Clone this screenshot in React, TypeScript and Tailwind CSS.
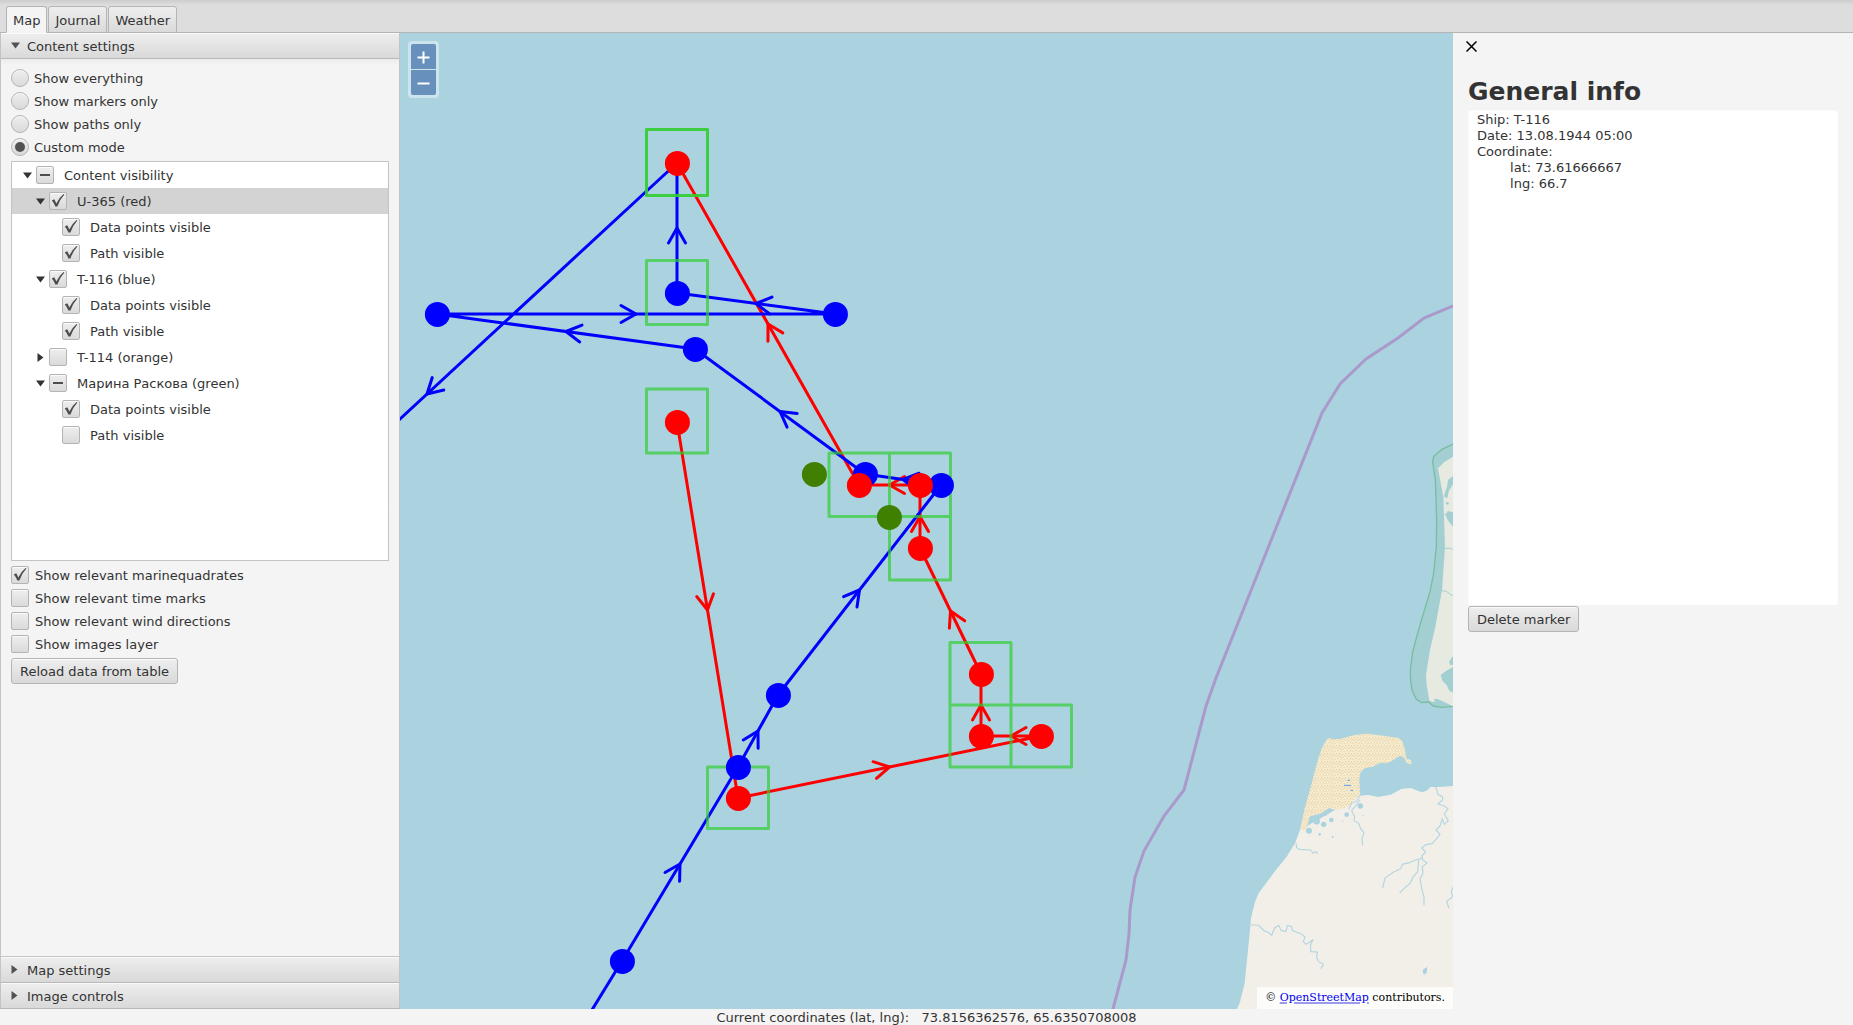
import { useEffect, useRef, useState } from "react";

type CheckState = "on" | "off" | "mixed";
type Point = [number, number];

const box =
  "peer m-0 size-[18px] shrink-0 appearance-none border border-[#b4b4b4] bg-linear-to-b from-[#eeeeee] to-[#dadada] shadow-[inset_0_1px_0_#fbfbfb]";

function CheckBox({ label, state, gap = "gap-[6px]" }: { label: string; state: CheckState; gap?: string }) {
  const ref = useRef<HTMLInputElement>(null);
  useEffect(() => {
    if (ref.current) ref.current.indeterminate = state === "mixed";
  }, [state]);
  return (
    <label className={`flex h-[18px] items-center ${gap}`}>
      <span className="relative flex size-[18px]">
        <input ref={ref} type="checkbox" defaultChecked={state === "on"} className={`${box} rounded-[2px]`} />
        <svg viewBox="0 0 18 18" className="pointer-events-none absolute inset-0 hidden peer-checked:block">
          <path d="M2.8 8.4L5.2 7.2Q6.500 9.200 7.300 11.400Q10 5.800 14.600 2L15.400 2.600Q10.800 7.600 8.400 14.500H6.400Q5.200 11 2.800 8.400Z" fill="#4d4d4d" />
        </svg>
        <svg viewBox="0 0 18 18" className="pointer-events-none absolute inset-0 hidden peer-indeterminate:block">
          <path d="M4 9H14" stroke="#4d4d4d" strokeWidth="2" />
        </svg>
      </span>
      <span className="pt-0.5">{label}</span>
    </label>
  );
}

function RadioButton({ label, checked }: { label: string; checked?: boolean }) {
  return (
    <label className="flex h-[18px] items-center gap-[5px]">
      <span className="relative flex size-[18px]">
        <input type="radio" name="mode" defaultChecked={checked} className={`${box} rounded-full`} />
        <span className="pointer-events-none absolute inset-1 hidden rounded-full bg-[#525252] peer-checked:block" />
      </span>
      <span className="pt-0.5">{label}</span>
    </label>
  );
}

function Triangle({ open }: { open: boolean }) {
  return open ? (
    <svg width="9" height="7" viewBox="0 0 9 7">
      <path d="M0 .5H9L4.5 6.5Z" fill="currentColor" />
    </svg>
  ) : (
    <svg width="7" height="9" viewBox="0 0 7 9">
      <path d="M.5 0V9L6.5 4.5Z" fill="currentColor" />
    </svg>
  );
}

const tree: { label: string; level: 0 | 1 | 2; state: CheckState; open?: boolean; selected?: boolean }[] = [
  { label: "Content visibility", level: 0, state: "mixed", open: true },
  { label: "U-365 (red)", level: 1, state: "on", open: true, selected: true },
  { label: "Data points visible", level: 2, state: "on" },
  { label: "Path visible", level: 2, state: "on" },
  { label: "T-116 (blue)", level: 1, state: "on", open: true },
  { label: "Data points visible", level: 2, state: "on" },
  { label: "Path visible", level: 2, state: "on" },
  { label: "T-114 (orange)", level: 1, state: "off", open: false },
  { label: "Марина Раскова (green)", level: 1, state: "mixed", open: true },
  { label: "Data points visible", level: 2, state: "on" },
  { label: "Path visible", level: 2, state: "off" },
];
const indents = ["pl-[6px]", "pl-[19px]", "pl-8"];

function PaneHeader({ title, open = false }: { title: string; open?: boolean }) {
  return (
    <button
      type="button"
      aria-expanded={open}
      className="flex h-[26px] w-full items-center border-b border-[#b8b8b8] bg-linear-to-b from-[#eeeeee] to-[#d9d9d9] px-[10px] shadow-[inset_0_1px_0_#fafafa]"
    >
      <span className="flex w-4 text-[#525252]">
        <Triangle open={open} />
      </span>
      <span className="pt-0.5">{title}</span>
    </button>
  );
}

function Sidebar() {
  return (
    <aside className="flex w-[400px] shrink-0 flex-col border-x border-[#c4c4c4]">
      <PaneHeader title="Content settings" open />
      <div className="flex flex-1 flex-col items-start gap-[5px] bg-linear-to-b from-[#ebebeb] to-[#f4f4f4] to-[6px] p-[10px]">
        <RadioButton label="Show everything" />
        <RadioButton label="Show markers only" />
        <RadioButton label="Show paths only" />
        <RadioButton label="Custom mode" checked />
        <ul className="h-[400px] w-full border border-[#c4c4c4] bg-white">
          {tree.map((n, i) => (
            <li key={i} className={`flex h-[26px] items-center ${indents[n.level]} ${n.selected ? "bg-[#d3d3d3]" : ""}`}>
              {n.open === undefined ? (
                <span className="w-[18px]" />
              ) : (
                <button
                  type="button"
                  aria-label={`Toggle ${n.label}`}
                  aria-expanded={n.open}
                  className="flex h-full w-[18px] items-center justify-center text-[#333333]"
                >
                  <Triangle open={n.open} />
                </button>
              )}
              <CheckBox label={n.label} state={n.state} gap="gap-[10px]" />
            </li>
          ))}
        </ul>
        <CheckBox label="Show relevant marinequadrates" state="on" />
        <CheckBox label="Show relevant time marks" state="off" />
        <CheckBox label="Show relevant wind directions" state="off" />
        <CheckBox label="Show images layer" state="off" />
        <PushButton>Reload data from table</PushButton>
      </div>
      <div className="border-t border-[#c4c4c4]">
        <PaneHeader title="Map settings" />
        <PaneHeader title="Image controls" />
      </div>
    </aside>
  );
}

function PushButton({ children }: { children: string }) {
  return (
    <button
      type="button"
      className="h-[26px] rounded-[3px] border border-[#b4b4b4] bg-linear-to-b from-[#eeeeee] to-[#d9d9d9] px-2 pt-0.5 shadow-[inset_0_1px_0_#fbfbfb]"
    >
      {children}
    </button>
  );
}

const redPath: Point[] = [[677, 422], [738, 798], [1041, 736], [981, 736], [981, 674], [920, 548], [920, 485], [859, 485], [677, 163]];
const bluePath: Point[] = [
  [560, 1062], [622, 961], [738, 767], [778, 695], [941, 485], [865, 474], [695, 349], [437, 314], [835, 314], [677, 293], [677, 163], [177, 625],
];
const blueDots: Point[] = bluePath.slice(1, 10);
const greenDots: Point[] = [[814, 474], [889, 517]];

function Track({ points, color }: { points: Point[]; color: string }) {
  return (
    <g stroke={color} strokeWidth="3" fill="none" strokeLinecap="round" strokeLinejoin="round">
      <polyline points={points.map((p) => p.join(",")).join(" ")} />
      {points.slice(1).map(([x, y], i) => {
        const [px, py] = points[i];
        const angle = (Math.atan2(y - py, x - px) * 180) / Math.PI;
        return <path key={i} d="M-15 -8.5L0 0L-15 8.5" transform={`translate(${(x + px) / 2} ${(y + py) / 2}) rotate(${angle})`} />;
      })}
    </g>
  );
}

function Dots({ points, color }: { points: Point[]; color: string }) {
  return (
    <g fill={color}>
      {points.map(([x, y], i) => (
        <circle key={i} cx={x + 0.4} cy={y + 0.4} r="12.5" />
      ))}
    </g>
  );
}

function Terrain() {
  return (
    <>
      <defs>
        <pattern id="sand" width="27" height="24" patternUnits="userSpaceOnUse">
          <rect width="27" height="24" fill="#f6ebcf" />
          <path
            d="M1 2h3M10 4h3M19 1h3M5 9h3M14 11h3M23 8h3M1 16h3M9 18h3M18 17h3M24 21h3M5 22h3M14 22h3"
            stroke="#ddc793"
            strokeWidth="3"
          />
        </pattern>
      </defs>
      <g transform="translate(1240 700) scale(.33333)">
        <path
          d="M0 906L14 850L20 790L28 710L33 655L45 605L56 580L100 520L140 470L165 430L180 390L360 287L385 285L414 291L452 284L484 267L512 264L546 277L560 272L573 260L584 262L639 258L1600 240V1000H-40Z"
          fill="#f2efe9"
        />
        <path
          d="M180 390L194 325L212 262L232 185L247 140L262 116L270 114L276 118L300 117L340 106L378 101L415 105L448 110L475 113L487 124L495 150L499 175L512 180L516 194L500 188L493 174L480 167L468 175L446 188L420 189L398 200L375 204L362 216L358 235L360 285L345 298L330 315L310 327L280 329L268 323L245 340L210 349L197 391Z"
          fill="url(#sand)"
        />
        <g fill="#aad3df">
          <circle cx="230" cy="364" r="10" />
          <circle cx="251" cy="373" r="8" />
          <circle cx="274" cy="360" r="7" />
          <circle cx="257" cy="342" r="5" />
          <circle cx="207" cy="392" r="9" />
          <circle cx="239" cy="403" r="4" />
          <circle cx="320" cy="344" r="7" />
          <circle cx="361" cy="318" r="8" />
          <circle cx="278" cy="411" r="3" />
          <circle cx="308" cy="364" r="2" />
          <circle cx="370" cy="347" r="2" />
          <path d="M550 808L562 801L560 819L552 824L548 816Z" />
        </g>
        <path d="M312 256H333M323 241H330M332 271H339" stroke="#539bed" strokeWidth="3" />
        <g fill="none" stroke="#b3d6e0" strokeWidth="3.5">
          <path d="M168 430L170 443L178 448L212 450L219 460L228 455L234 461" />
          <path d="M358 290L352 302L335 310L326 328M360 300L345 320L335 332L344 350L342 362L356 370L362 386L372 398L366 415L368 436" />
          <path d="M33 675H55L72 692L84 697L95 706L104 684L116 676L124 692L138 694L142 677L154 679L158 692L184 702L195 711L190 725L198 733L218 720L212 735L212 755L232 756L230 772L236 785L250 792L243 806" />
          <path d="M588 262L594 283L607 290L608 300L594 312L612 318L624 325L613 342L625 362L613 373L607 357L600 378L588 390L600 403L590 416L576 431L557 434L545 444L557 456L546 468L548 480L561 489L547 500L549 520L540 536L546 570L552 590V616" />
          <path d="M546 475L525 480L508 488L487 493L482 506L460 517L435 534L428 564M536 480L533 515L520 530L510 550L492 566L479 579M640 560L634 575L638 590L620 604L627 625" />
        </g>
      </g>
      <g transform="translate(1380 430) scale(.33333)">
        <path
          d="M219 42L186 58L161 79L158 96L166 150L170 270L169 350L161 430L150 485L120 585L98 665L91 720L92 755L97 783L109 808L125 818L146 816L160 828L185 832L219 829L700 820V30Z"
          fill="#a3cfd3"
          stroke="#78bd9f"
          strokeWidth="4"
        />
        <path d="M219 80L192 97L174 115L190 200L192 260L195 350L186 480L166 590L150 660L138 735L140 765L148 812L164 817L162 806L175 808L219 829H700V60Z" fill="#e6eae0" />
        <path
          d="M219 138L204 150L201 170L191 200L202 204L206 184L219 163ZM219 247L203 243L197 256L203 270L219 290ZM219 678L207 695L211 706L219 704ZM219 710L195 725L182 735L187 752L200 765L207 781L219 788Z"
          fill="#a3cfd3"
        />
        <circle cx="202" cy="220" r="4" fill="#a3cfd3" />
        <path d="M195 355H212L219 359M186 482L199 484L211 493L219 497M192 253H200" stroke="#a3cfd3" strokeWidth="3" fill="none" />
      </g>
      <path
        d="M1453 306L1424 318L1398 338L1366 359L1340 384L1322 413L1216 678L1206 706L1184 790L1164 816L1144 851L1135 877L1130 910L1129 934L1126 960L1113 1009L1100 1060"
        fill="none"
        stroke="#a99acb"
        strokeWidth="3"
      />
    </>
  );
}

function MapView() {
  return (
    <main className="relative min-w-0 flex-1 overflow-hidden bg-[#aad3df]">
      <svg
        role="img"
        aria-label="Ship tracks"
        viewBox="400 33 1053 976"
        preserveAspectRatio="xMidYMid slice"
        className="absolute inset-0 size-full"
      >
        <Terrain />
        <Track points={redPath} color="#ff0000" />
        <Track points={bluePath} color="#0000ff" />
        <g fill="none" stroke="#32cd32" strokeOpacity=".7" strokeWidth="3" strokeLinejoin="round">
          <path d="M646.5 129.5h61v66h-61ZM646.5 260.5h61v64h-61ZM646.5 389h61v64h-61ZM829 453h60.5v63.5h-60.5ZM889.5 453h61v63.5h-61ZM889.5 516.5h61v63.5h-61ZM950 642.5h61v62.5h-61ZM950 705h61v62h-61ZM1011 705h60.5v62h-60.5ZM707.5 767h61v61.5h-61Z" />
          <path d="M646.5 129.5h61v66h-61Z" />
        </g>
        <Dots points={greenDots} color="#408000" />
        <Dots points={blueDots} color="#0000ff" />
        <Dots points={redPath} color="#ff0000" />
      </svg>
      <div className="absolute top-2 left-2 flex flex-col gap-px rounded bg-white/40 p-[3px]">
        <button type="button" aria-label="Zoom in" className="rounded-t-[2px] bg-[#6790bc] text-white">
          <svg width="25" height="25" viewBox="0 0 25 25">
            <path d="M6.5 13.5H18.5M12.5 7.5V19.5" stroke="currentColor" strokeWidth="2" />
          </svg>
        </button>
        <button type="button" aria-label="Zoom out" className="rounded-b-[2px] bg-[#6790bc] text-white">
          <svg width="25" height="25" viewBox="0 0 25 25">
            <path d="M6.5 13.5H18.5" stroke="currentColor" strokeWidth="2" />
          </svg>
        </button>
      </div>
      <p className="absolute right-0 bottom-0 h-[22px] bg-white/80 px-2 font-['DejaVu_Serif',serif] text-[11px] leading-[22px] text-black">
        ©{" "}
        <a href="#osm" className="text-[#0000ee] underline decoration-[#9a9aee] decoration-2">
          OpenStreetMap
        </a>{" "}
        contributors.
      </p>
    </main>
  );
}

function InfoPanel() {
  return (
    <aside className="flex w-[400px] shrink-0 flex-col items-start px-[15px]">
      <button type="button" aria-label="Close" className="mt-2 -ml-[2px] text-black">
        <svg width="11" height="11" viewBox="0 0 11 11" className="block">
          <path d="M.5 .5L10.5 10.5M10.5 .5L.5 10.5" stroke="currentColor" strokeWidth="1.5" />
        </svg>
      </button>
      <h1 className="mt-6 text-[25px] leading-8 font-bold">General info</h1>
      <textarea
        readOnly
        aria-label="General info"
        className="h-[497px] w-full resize-none rounded-[2px] bg-white px-[9px] py-1 leading-4 shadow-[inset_0_2px_2px_#f0f0f0] outline-none [tab-size:8]"
        value={"Ship: T-116\nDate: 13.08.1944 05:00\nCoordinate:\n\tlat: 73.61666667\n\tlng: 66.7"}
      />
      <span className="mt-px flex">
        <PushButton>Delete marker</PushButton>
      </span>
    </aside>
  );
}

export default function App() {
  const [active, setActive] = useState("Map");
  return (
    <div className="flex h-screen flex-col bg-[#f4f4f4] font-['DejaVu_Sans',sans-serif] text-[13px] leading-4 text-[#333333]">
      <nav
        role="tablist"
        className="flex h-[33px] shrink-0 items-end gap-px border-b border-[#b4b4b4] bg-linear-to-b from-[#cdcdcd] to-[#dddddd] to-[5px] pl-[6px]"
      >
        {["Map", "Journal", "Weather"].map((t) => (
          <button
            key={t}
            type="button"
            role="tab"
            aria-selected={active === t}
            onClick={() => setActive(t)}
            className={`-mb-px h-[27px] rounded-t-[3px] border border-[#b4b4b4] px-[6px] pt-0.5 ${
              active === t ? "border-b-[#f4f4f4] bg-[#f4f4f4]" : "bg-linear-to-b from-[#eeeeee] to-[#dadada]"
            }`}
          >
            {t}
          </button>
        ))}
      </nav>
      <div className="flex min-h-0 flex-1">
        <Sidebar />
        <MapView />
        <InfoPanel />
      </div>
      <footer className="h-4 shrink-0 text-center leading-[18px] whitespace-pre">{"Current coordinates (lat, lng):   73.8156362576, 65.6350708008"}</footer>
    </div>
  );
}
